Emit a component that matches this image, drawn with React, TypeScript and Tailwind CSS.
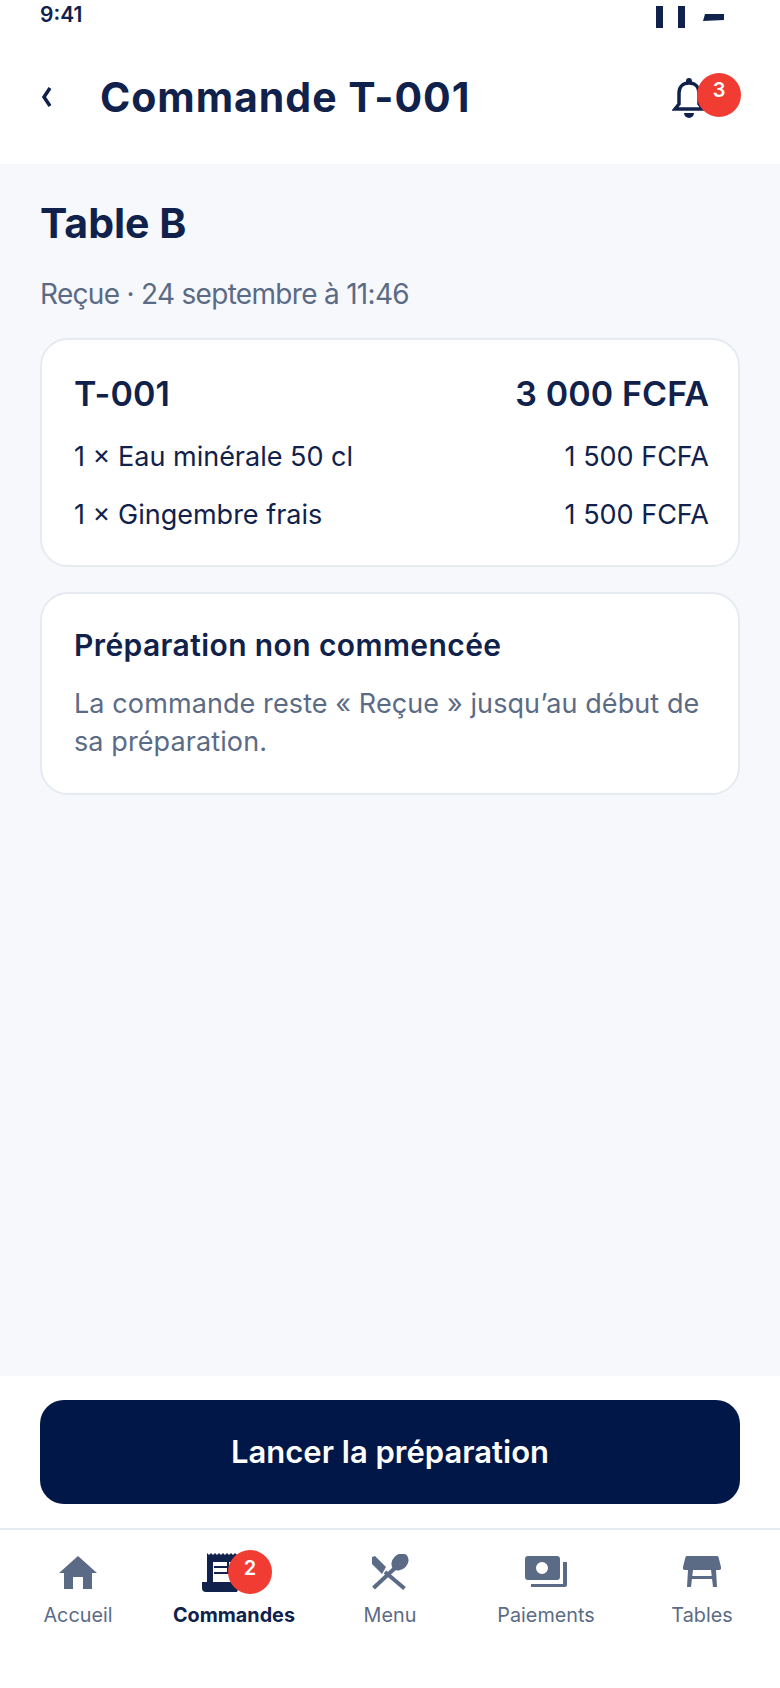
const dm = "font-['Inter',sans-serif]";

function HomeIcon() {
  return (
    <svg width="38" height="33" viewBox="0 0 38 33" fill="#5b6b85">
      <path d="M19 0 L38 17 L33 17 L33 33 L24 33 L24 21 L14 21 L14 33 L5 33 L5 17 L0 17 Z" />
    </svg>
  );
}

function ReceiptIcon() {
  return (
    <svg className="mr-[24px]" width="40" height="39" viewBox="0 0 40 39" fill="#10224b">
      <path d="M5 0 L7 2 L9 0 L11 2 L13 0 L15 2 L17 0 L19 2 L21 0 L23 2 L25 0 L27 2 L29 0 L31 2 L33 0 L35 2 L35 30 L37 34 L35 39 L4 39 Q0 39 0 35 L0 29 L5 29 Z" />
      <path d="M11 9 H33 V29 H11 Z" fill="#fff" />
      <path d="M12 13 H33 V15 H12 Z M12 19 H33 V21 H12 Z M25 9 H27 V21 H25 Z" />
    </svg>
  );
}

function MenuIcon() {
  return (
    <svg width="38" height="36" viewBox="0 0 38 36" fill="#5b6b85">
      <path d="M1 3 L4 2 L15 13 L11 20 L1 10 Z" />
      <path d="M14 18 L33.5 34.5" stroke="#5b6b85" strokeWidth="4" fill="none" />
      <path d="M24 14 L2.5 34" stroke="#5b6b85" strokeWidth="4" fill="none" />
      <ellipse cx="29" cy="8" rx="7.5" ry="9.5" transform="rotate(45 29 8)" />
    </svg>
  );
}

function PayIcon() {
  return (
    <svg width="42" height="32" viewBox="0 0 42 32" fill="#5b6b85">
      <path fillRule="evenodd" d="M3 0 H32 Q35 0 35 3 V21 Q35 24 32 24 H3 Q0 24 0 21 V3 Q0 0 3 0 Z M17 6 A6 6 0 1 0 17 18 A6 6 0 1 0 17 6 Z" />
      <path d="M38 6 H42 V29 Q42 31 40 31 H6 V28 H38 Z" />
    </svg>
  );
}

function TableIcon() {
  return (
    <svg width="38" height="32" viewBox="0 0 38 32" fill="#5b6b85">
      <path d="M4 0 H34 Q35 0 35.5 1 L38 11 Q38.5 14 36 14 H2 Q-0.5 14 0 11 L2.5 1 Q3 0 4 0 Z" />
      <path d="M5 14 H10 L8 31 H4 Z M28 14 H33 L34 31 H30 Z M8 20 H30 V23 H8 Z" />
    </svg>
  );
}

function Tab({ label, icon, active, badge }: { label: string; icon: React.ReactNode; active?: boolean; badge?: string }) {
  return (
    <div className="relative flex flex-col items-center w-[156px]">
      <div className="h-[42px] flex items-center justify-center">{icon}</div>
      {badge && (
        <div className="absolute left-[72px] top-[-1px] w-[44px] h-[44px] rounded-full bg-[#f03c32] text-white text-[20px] font-semibold flex justify-center pt-[3px] font-['Inter',sans-serif]">
          {badge}
        </div>
      )}
      <div className={`mt-[10px] text-[19.8px] leading-[24px] font-['Inter',sans-serif] ${active ? "font-bold text-[#10224b]" : "text-[#5b6b85]"}`}>
        {label}
      </div>
    </div>
  );
}

export default function App() {
  return (
    <div className={`w-[780px] h-[1688px] bg-[#f6f8fc] flex flex-col text-[#10224b] ${dm}`}>
      {/* status bar + header */}
      <div className="h-[164px] bg-white shrink-0 flex flex-col">
        <div className="h-[36px] px-[40px] pt-[3px] flex justify-between">
          <span className="text-[21px] leading-[24px] font-semibold">9:41</span>
          <div className="flex items-start gap-[15px] pt-[3px] pr-[16px]">
            <div className="w-[7px] h-[22px] bg-[#10224b]" />
            <div className="w-[7px] h-[22px] bg-[#10224b]" />
            <svg className="mt-[8px] ml-[3px]" width="21" height="7" viewBox="0 0 21 7" fill="#10224b">
              <path d="M2 0 H21 V6 L0 7 Z" />
            </svg>
          </div>
        </div>
        <div className="flex items-center justify-between pl-[40px] pr-[39px] mt-[38px]">
          <div className="flex items-center">
            <svg width="12" height="20" viewBox="0 0 12 20" fill="none" stroke="#10224b" strokeWidth="3.5">
              <path d="M10 1 L4 10 L10 19" />
            </svg>
            <h1 className="ml-[48px] text-[41px] leading-[46px] font-bold tracking-[0.95px]">Commande T-001</h1>
          </div>
          <div className="relative w-[69px] h-[44px]">
            <svg className="absolute left-0 top-[3px]" width="34" height="40" viewBox="0 0 34 40" fill="#10224b">
              <circle cx="17" cy="3" r="3" />
              <path d="M7 26 V15 C7 9 11 5 17 5 C23 5 27 9 27 15 V26 L31 31 H3 Z" fill="none" stroke="#10224b" strokeWidth="3.5" />
              <path d="M12 35 H22 A5 5 0 0 1 12 35 Z" />
            </svg>
            <div className="absolute right-0 top-[-2px] w-[44px] h-[44px] rounded-full bg-[#f03c32] text-white text-[20px] font-semibold flex justify-center pt-[2px]">
              3
            </div>
          </div>
        </div>
      </div>

      {/* content */}
      <div className="flex-1 px-[40px] pt-[34px]">
        <h2 className="text-[41px] leading-[50px] font-bold">Table B</h2>
        <p className="mt-[28px] text-[28px] leading-[36px] text-[#5b6b85] tracking-[-0.7px]">Reçue · 24 septembre à 11:46</p>

        <div className="mt-[26px] bg-white border-2 border-[#e6eaf1] rounded-[28px] pl-[32px] pr-[29px] pt-[34px] h-[229px]">
          <div className="flex justify-between items-center text-[34px] leading-[40px] font-semibold tracking-[0.1px]">
            <span>T-001</span>
            <span>3 000 FCFA</span>
          </div>
          <div className="mt-[25px] flex justify-between text-[27px] leading-[36px]">
            <span>1 × Eau minérale 50 cl</span>
            <span>1 500 FCFA</span>
          </div>
          <div className="mt-[22px] flex justify-between text-[27px] leading-[36px]">
            <span>1 × Gingembre frais</span>
            <span>1 500 FCFA</span>
          </div>
        </div>

        <div className="mt-[25px] bg-white border-2 border-[#e6eaf1] rounded-[28px] pl-[32px] pr-[29px] pt-[32px] h-[203px]">
          <div className="text-[30px] leading-[38px] font-semibold tracking-[0.4px]">Préparation non commencée</div>
          <p className="mt-[21px] text-[27px] leading-[38px] text-[#5b6b85] tracking-[0.1px]">
            La commande reste « Reçue » jusqu’au début de sa préparation.
          </p>
        </div>
      </div>

      {/* action */}
      <div className="h-[154px] bg-white shrink-0 px-[40px] pt-[24px] border-b-2 border-[#e6eaf1]">
        <button className="w-full h-[104px] rounded-[24px] bg-[#001748] text-white text-[31px] font-semibold">
          Lancer la préparation
        </button>
      </div>

      {/* tabs */}
      <div className="h-[158px] bg-white shrink-0 flex pt-[21px]">
        <Tab label="Accueil" icon={<HomeIcon />} />
        <Tab label="Commandes" active icon={<ReceiptIcon />} badge="2" />
        <Tab label="Menu" icon={<MenuIcon />} />
        <Tab label="Paiements" icon={<PayIcon />} />
        <Tab label="Tables" icon={<TableIcon />} />
      </div>
    </div>
  );
}
